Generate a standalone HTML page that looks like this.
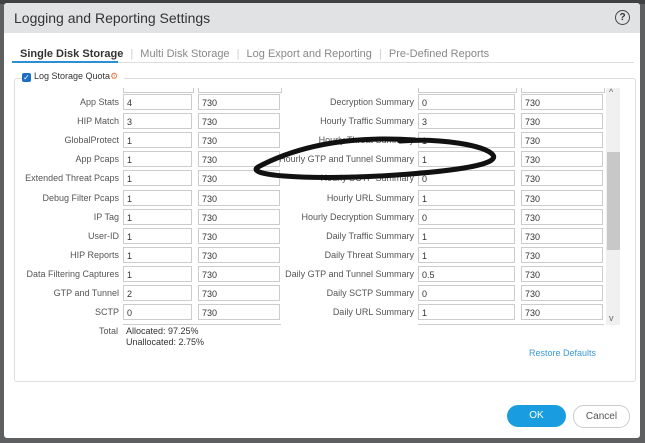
<!DOCTYPE html>
<html><head><style>
body{margin:0;width:645px;height:443px;background:#5d5f61;position:relative;overflow:hidden;font-family:"Liberation Sans",sans-serif;}
.dlg{position:absolute;left:4px;top:3px;width:636px;height:435px;background:#fff;border-radius:3px;}
.hdr{position:absolute;left:0;top:0;width:636px;height:30px;background:#e1e2e3;border-radius:3px 3px 0 0;}
.ttl{position:absolute;left:10px;top:7px;font-size:14px;color:#333;}
.help{position:absolute;right:10px;top:7px;width:13px;height:13px;border:1.5px solid #444;border-radius:50%;font-size:10px;text-align:center;line-height:13px;color:#333;font-weight:bold}
.tabs{position:absolute;top:45px;font-size:11px;color:#888;left:16px;white-space:nowrap}
.tabs span{margin-right:4px}
.ab{position:absolute;left:8px;top:59px;width:622px;height:1px;background:#ddd}
.ul{position:absolute;left:8px;top:58px;width:106px;height:2px;background:#2b8fd0}
.fs{position:absolute;left:10px;top:75px;width:620px;height:302px;border:1px solid #ddd;border-radius:3px}
.lg{position:absolute;left:18px;top:68px;background:#fff;font-size:9px;color:#333;padding-right:6px}
.cb{display:inline-block;width:9px;height:9px;background:#1e6fc4;border-radius:2px;vertical-align:-1px;color:#fff;font-size:8px;line-height:9px;text-align:center;margin-right:3px}
.l{position:absolute;font-size:9px;color:#555;text-align:right;width:200px}
.i{position:absolute;height:16px;border:1px solid #ccc;font-size:9px;color:#333;line-height:16px;padding-left:3px;box-sizing:border-box;background:#fff}
.sb{position:absolute;left:606px;top:88px;width:14px;height:237px;background:#f0f0f0}
.th{position:absolute;left:607px;top:152px;width:13px;height:98px;background:#c8c8c8}
.ok{position:absolute;left:507px;top:405px;width:59px;height:22px;background:#1a9de0;border-radius:11px;color:#fff;font-size:10px;text-align:center;line-height:22px}
.cn{position:absolute;left:573px;top:405px;width:55px;height:21px;border:1px solid #ccc;border-radius:11px;color:#555;font-size:10px;text-align:center;line-height:21px}
</style></head><body>
<div style="position:absolute;left:0;top:0;width:645px;height:4px;background:#3f4143"></div>
<div class="dlg">
<div class="hdr"><div class="ttl">Logging and Reporting Settings</div><div class="help">?</div></div>
<div class="tabs"><span style="color:#333;font-weight:bold">Single Disk Storage</span> <span style="color:#ccc">|</span> <span>Multi Disk Storage</span> <span style="color:#ccc">|</span> <span>Log Export and Reporting</span> <span style="color:#ccc">|</span> <span>Pre-Defined Reports</span></div>
<div class="ab"></div><div class="ul"></div>
<div class="fs"></div>
<div class="lg"><span class="cb">✓</span>Log Storage Quota<span style="color:#e07a40">⚙</span></div>
</div>
<div id="rows"></div>
<div style="position:absolute;left:123px;top:88px;width:69px;height:4px;border:1px solid #ccc;border-top:none"></div>
<div style="position:absolute;left:198px;top:88px;width:82px;height:4px;border:1px solid #ccc;border-top:none"></div>
<div style="position:absolute;left:418px;top:88px;width:97px;height:4px;border:1px solid #ccc;border-top:none"></div>
<div style="position:absolute;left:521px;top:88px;width:82px;height:4px;border:1px solid #ccc;border-top:none"></div>
<div class="sb"></div><div class="th"></div>
<div style="position:absolute;left:609px;top:87px;font-size:9px;color:#666">^</div>
<div style="position:absolute;left:609px;top:313px;font-size:9px;color:#666">v</div>
<div class="l" style="left:-82px;top:326px">Total</div>
<div style="position:absolute;left:126px;top:326px;font-size:9px;color:#333;line-height:11px">Allocated: 97.25%<br>Unallocated: 2.75%</div>
<div style="position:absolute;left:529px;top:348px;font-size:9px;color:#3b9ad6">Restore Defaults</div>
<div class="ok">OK</div><div class="cn">Cancel</div>
<svg style="position:absolute;left:0;top:0" width="645" height="443"><path d="M415 140 C 340 135, 290 150, 258 167 C 245 175, 300 180, 380 176 C 450 172, 500 165, 493 155 C 485 145, 440 138, 400 141" fill="none" stroke="#111" stroke-width="5" stroke-linecap="round"/></svg>
<script>
var L=[["App Stats","4","Decryption Summary","0"],["HIP Match","3","Hourly Traffic Summary","3"],["GlobalProtect","1","Hourly Threat Summary","1"],["App Pcaps","1","Hourly GTP and Tunnel Summary","1"],["Extended Threat Pcaps","1","Hourly SCTP Summary","0"],["Debug Filter Pcaps","1","Hourly URL Summary","1"],["IP Tag","1","Hourly Decryption Summary","0"],["User-ID","1","Daily Traffic Summary","1"],["HIP Reports","1","Daily Threat Summary","1"],["Data Filtering Captures","1","Daily GTP and Tunnel Summary","0.5"],["GTP and Tunnel","2","Daily SCTP Summary","0"],["SCTP","0","Daily URL Summary","1"]];
var h="";L.forEach(function(r,k){var y=94+k*19.1;
h+='<div class="l" style="left:-81px;top:'+(y+3)+'px">'+r[0]+'</div><div class="i" style="left:123px;top:'+y+'px;width:69px">'+r[1]+'</div><div class="i" style="left:198px;top:'+y+'px;width:82px">730</div>';
h+='<div class="l" style="left:214px;top:'+(y+3)+'px">'+r[2]+'</div><div class="i" style="left:418px;top:'+y+'px;width:97px">'+r[3]+'</div><div class="i" style="left:521px;top:'+y+'px;width:82px">730</div>';});
h+='<div style="position:absolute;left:123px;top:324px;width:158px;height:1px;background:#ccc"></div><div style="position:absolute;left:418px;top:324px;width:186px;height:1px;background:#ccc"></div>';
document.getElementById("rows").innerHTML=h;
</script>
</body></html>
